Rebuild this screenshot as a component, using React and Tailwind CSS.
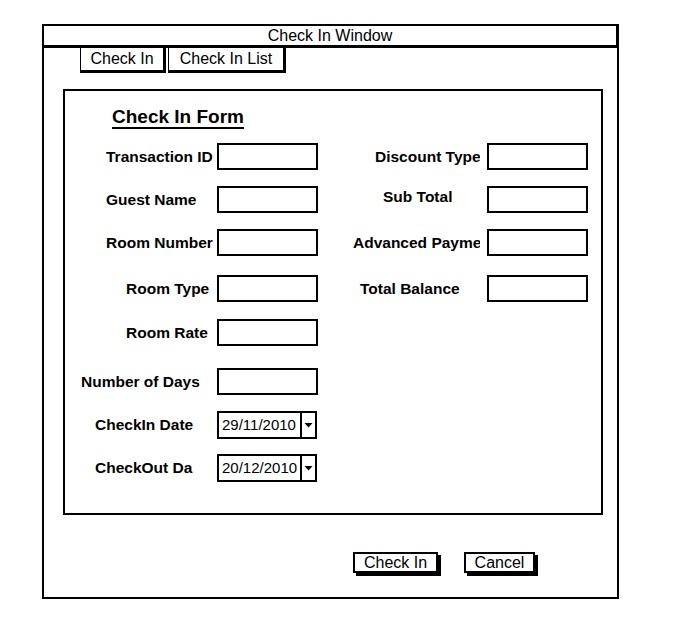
import React from "react";

function Input() {
  return <div className="w-[101px] h-[27px] border-2 border-black bg-white shrink-0" />;
}

function DateInput({ value }) {
  return (
    <div className="w-[100px] h-[28px] border-2 border-black bg-white shrink-0 flex">
      <div className="flex-1 overflow-hidden whitespace-nowrap pl-[3px] text-[15px] leading-[24px]">{value}</div>
      <div className="w-[15px] border-l-2 border-black flex items-center justify-center">
        <svg width="9" height="6" viewBox="0 0 9 6">
          <polygon points="0.5,1 8.5,1 4.5,5.5" fill="#000" />
        </svg>
      </div>
    </div>
  );
}

function Label({ text, pl, w, gap, extra = "" }) {
  return (
    <div
      className={`shrink-0 overflow-hidden whitespace-nowrap font-bold text-[15.5px] leading-[20px] ${extra}`}
      style={{ width: w, paddingLeft: pl, marginRight: gap }}
    >
      {text}
    </div>
  );
}

function LeftField({ label, pl, children }) {
  return (
    <div className="flex items-center">
      <Label text={label} pl={pl} w={150} gap={2} />
      {children || <Input />}
    </div>
  );
}

function RightField({ label, pl, extra }) {
  return (
    <div className="flex items-center ml-[17px]">
      <Label text={label} pl={pl} w={145} gap={7} extra={extra} />
      <Input />
    </div>
  );
}

function Button({ children, w }) {
  return (
    <div
      className="h-[21px] border-2 border-black bg-white shadow-[3px_3px_0_#000] flex items-center justify-center text-[16px] leading-none"
      style={{ width: w }}
    >
      {children}
    </div>
  );
}

export default function App() {
  return (
    <div className="w-[700px] h-[643px] bg-white pl-[42px] pt-[24px] font-['Liberation_Sans',Arial,sans-serif] text-black">
      <div className="w-[577px] h-[575px] border-2 border-black flex flex-col">
        <div className="h-[22px] border-b-[3px] border-r-2 border-black flex items-center justify-center text-[16px] leading-none -mr-[1px]">
          Check In Window
        </div>
        <div className="flex ml-[36px] gap-[2px]">
          <div className="w-[86px] h-[25px] border-l border-black border-r-[3px] border-b-[3px] flex items-center justify-center text-[16px] leading-none pb-[1px]">
            Check In
          </div>
          <div className="w-[118px] h-[25px] border-l border-black border-r-[3px] border-b-[3px] flex items-center justify-center text-[16px] leading-none pb-[1px]">
            Check In List
          </div>
        </div>
        <div className="mt-[16px] ml-[19px] w-[540px] h-[426px] border-2 border-black flex flex-col">
          <div className="pt-[14px] pl-[47px] text-[19px] font-bold leading-[23px]">
            <span className="underline decoration-2 underline-offset-[4px]">Check In Form</span>
          </div>
          <div className="flex mt-[15px]">
            <LeftField label="Transaction ID" pl={41} />
            <RightField label="Discount Type" pl={40} />
          </div>
          <div className="flex mt-[16px]">
            <LeftField label="Guest Name" pl={41} />
            <RightField label="Sub Total" pl={48} extra="pb-[6px]" />
          </div>
          <div className="flex mt-[16px]">
            <LeftField label="Room Number" pl={41} />
            <RightField label="Advanced Payme" pl={18} />
          </div>
          <div className="flex mt-[19px]">
            <LeftField label="Room Type" pl={61} />
            <RightField label="Total Balance" pl={25} />
          </div>
          <div className="flex mt-[17px]">
            <LeftField label="Room Rate" pl={61} />
          </div>
          <div className="flex mt-[22px]">
            <LeftField label="Number of Days" pl={16} />
          </div>
          <div className="flex mt-[16px]">
            <LeftField label="CheckIn Date" pl={30}>
              <DateInput value="29/11/2010" />
            </LeftField>
          </div>
          <div className="flex mt-[15px]">
            <LeftField label="CheckOut Da" pl={30}>
              <DateInput value="20/12/2010" />
            </LeftField>
          </div>
        </div>
        <div className="flex mt-[37px] ml-[309px] gap-[26px]">
          <Button w={85}>Check In</Button>
          <Button w={71}>Cancel</Button>
        </div>
      </div>
    </div>
  );
}
